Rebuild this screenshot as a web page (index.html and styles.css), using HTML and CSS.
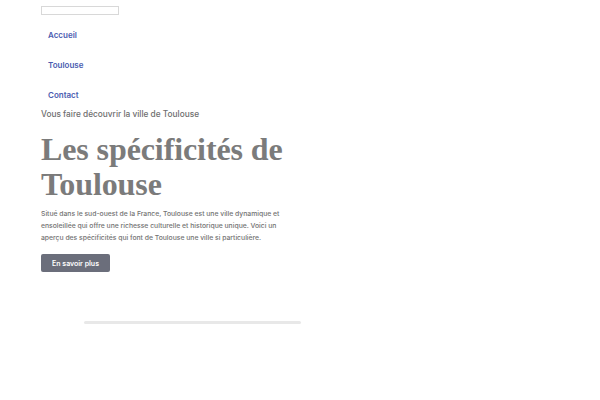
FILE: index.html
```html
<!DOCTYPE html>
<html lang="fr">
<head>
<meta charset="utf-8">
<link rel="stylesheet" href="styles.css">
</head>
<body>
<div class="page">
  <input class="search" type="text">
  <nav class="nav">
    <a href="#">Accueil</a>
    <a href="#">Toulouse</a>
    <a href="#">Contact</a>
  </nav>
  <section class="hero">
    <p class="kicker">Vous faire découvrir la ville de Toulouse</p>
    <h1 class="title">Les spécificités de Toulouse</h1>
    <p class="lead">Situé dans le sud-ouest de la France, Toulouse est une ville dynamique et ensoleillée qui offre une richesse culturelle et historique unique. Voici un aperçu des spécificités qui font de Toulouse une ville si particulière.</p>
    <button class="btn">En savoir plus</button>
  </section>
  <div class="rule"></div>
</div>
</body>
</html>
```
FILE: styles.css
```css
* { box-sizing: border-box; }
html, body { margin: 0; background: #fff; }
body { font-family: "Inter", "Noto Sans", sans-serif; }
.page { padding: 6px 0 0 41px; }
.search {
  display: block;
  width: 78px; height: 9px;
  border: 1px solid #d8d8d8;
  padding: 0; margin: 0;
  background: #fff;
}
.nav { display: flex; flex-direction: column; align-items: flex-start; padding: 14px 0 0 7px; gap: 18px; }
.nav a {
  color: #4a5cb0;
  font-size: 8px; font-weight: 600;
  text-decoration: none;
  line-height: 12px;
}
.hero { width: 290px; padding-top: 7px; }
.kicker { margin: 0; color: #6e6e6e; font-size: 8.3px; font-weight: 500; line-height: 12px; }
.title {
  margin: 12px 0 0;
  font-family: "Liberation Serif", serif;
  font-weight: 700;
  color: #7b7b7b;
  font-size: 32px;
  line-height: 35px;
  letter-spacing: -0.1px;
}
.lead {
  margin: 6px 0 0;
  width: 246px;
  color: #727272;
  font-size: 6.8px; font-weight: 500;
  line-height: 12px;
}
.btn {
  display: block;
  margin-top: 10px;
  background: #6b6e7b;
  color: #fff;
  border: 0;
  border-radius: 2px;
  font-family: inherit;
  font-size: 7px; font-weight: 600;
  width: 69px; height: 18px;
  padding: 0;
}
.rule {
  margin: 49px 0 0 43px;
  width: 217px; height: 3px;
  background: #e8e8e8;
  border-radius: 2px;
}
```
